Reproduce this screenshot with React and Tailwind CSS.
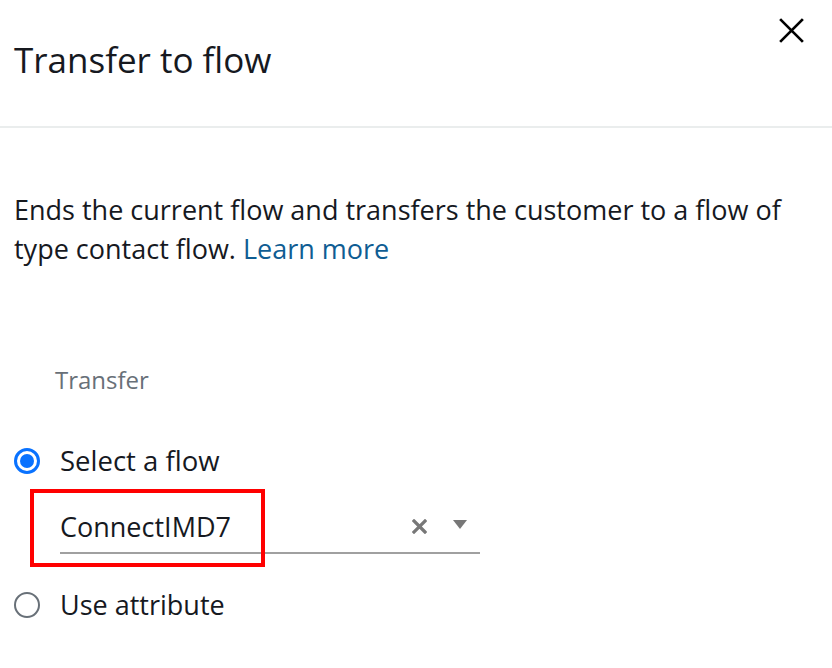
import React from "react";

export default function App() {
  return (
    <div className="w-[832px] h-[668px] bg-white overflow-hidden text-[#16191f]" style={{ fontFamily: '"Open Sans", "Noto Sans", Arial, sans-serif' }}>
      <div className="relative h-[128px] flex items-center px-[14px] border-b-2 border-[#eaeded]">
        <h1 className="text-[35px] font-normal text-[#16191f] leading-none -mt-[8px]">Transfer to flow</h1>
        <button className="absolute right-[28px] top-[18px] w-[25px] h-[25px]">
          <svg viewBox="0 0 24 24" width="25" height="25" fill="none" stroke="#000" strokeWidth="2.6" strokeLinecap="square">
            <path d="M2 2 L22 22 M22 2 L2 22" />
          </svg>
        </button>
      </div>
      <div className="px-[14px] pt-[62px]">
        <p className="text-[27px] leading-[39px] text-[#16191f] whitespace-nowrap">
          Ends the current flow and transfers the customer to a flow of
          <br />
          type contact flow. <span className="text-[#0f5d93]">Learn more</span>
        </p>
        <div className="mt-[97px] pl-[41px] text-[24px] text-[#687078] leading-[30px]">Transfer</div>
        <div className="mt-[51px] flex items-center gap-[20px] h-[30px]">
          <span className="w-[26px] h-[26px] rounded-full border-[3px] border-[#0972ff] flex items-center justify-center">
            <span className="w-[14px] h-[14px] rounded-full bg-[#0972ff]"></span>
          </span>
          <span className="text-[27.5px] leading-[30px]">Select a flow</span>
        </div>
        <div className="relative mt-[31px] ml-[46px] w-[420px] h-[47px] pb-[5px] border-b-2 border-[#a0a0a0] flex items-center">
          <span className="text-[27px] leading-[30px] text-[#16191f]">ConnectIMD7</span>
          <span className="absolute left-[352px] top-[12px]">
            <svg width="15" height="15" viewBox="0 0 15 15" stroke="#777" strokeWidth="3.2" strokeLinecap="square">
              <path d="M2 2 L13 13 M13 2 L2 13" />
            </svg>
          </span>
          <span className="absolute left-[393px] top-[13px]">
            <svg width="14" height="10" viewBox="0 0 14 10" fill="#777">
              <path d="M0 0 H14 L7 9 Z" />
            </svg>
          </span>
          <div className="absolute -left-[30px] -top-[18px] w-[235px] h-[78px] border-[4px] border-[#ff0000]"></div>
        </div>
        <div className="mt-[36px] flex items-center gap-[20px] h-[30px]">
          <span className="w-[26px] h-[26px] rounded-full border-2 border-[#687078]"></span>
          <span className="text-[27px] leading-[30px]">Use attribute</span>
        </div>
      </div>
    </div>
  );
}
